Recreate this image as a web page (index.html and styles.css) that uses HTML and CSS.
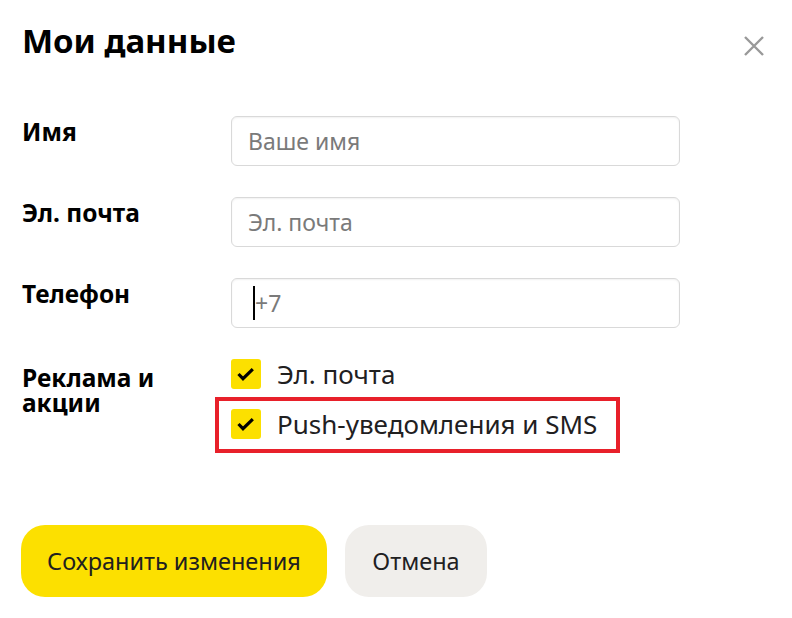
FILE: index.html
```html
<!DOCTYPE html>
<html lang="ru">
<head>
    <meta charset="UTF-8">
    <meta name="viewport" content="width=device-width, initial-scale=1.0">
    <title>Мои данные</title>
    <link rel="stylesheet" href="styles.css">
</head>
<body>

    <div class="dialog">
        <div class="dialog-head">
            <h1>Мои данные</h1>
            <button class="close" aria-label="Закрыть">
                <svg width="20" height="20" viewBox="0 0 20 20">
                    <path d="M1 1L19 19M19 1L1 19" stroke="#999" stroke-width="2.4" fill="none"/>
                </svg>
            </button>
        </div>

        <div class="form">
            <div class="row">
                <label class="label" for="name">Имя</label>
                <input class="field" id="name" type="text" placeholder="Ваше имя">
            </div>
            <div class="row">
                <label class="label" for="email">Эл. почта</label>
                <input class="field" id="email" type="text" placeholder="Эл. почта">
            </div>
            <div class="row">
                <label class="label" for="phone">Телефон</label>
                <div class="field phone">
                    <span class="caret"></span>
                    <span class="placeholder">+7</span>
                </div>
            </div>
            <div class="row">
                <div class="label label-multi">Реклама и<br>акции</div>
                <div class="options">
                    <div class="option">
                        <span class="check">
                            <svg width="30" height="30" viewBox="0 0 30 30">
                                <path d="M7.5 15L12 19.7L21.8 10.2" stroke="#000" stroke-width="3.2" fill="none"/>
                            </svg>
                        </span>
                        <span>Эл. почта</span>
                    </div>
                    <div class="option marked">
                        <span class="check">
                            <svg width="30" height="30" viewBox="0 0 30 30">
                                <path d="M7.5 15L12 19.7L21.8 10.2" stroke="#000" stroke-width="3.2" fill="none"/>
                            </svg>
                        </span>
                        <span>Push-уведомления и SMS</span>
                    </div>
                </div>
            </div>
        </div>

        <div class="actions">
            <button class="btn btn-save">Сохранить изменения</button>
            <button class="btn btn-cancel">Отмена</button>
        </div>
    </div>

</body>
</html>
```

FILE: styles.css
```css
body {
    margin: 0;
    padding: 0;
    background: #fff;
    font-family: "Noto Sans", Arial, sans-serif;
    color: #000;
}
.dialog {
    width: 792px;
    height: 618px;
    padding: 19px 0 0 22px;
    box-sizing: border-box;
}
.dialog-head {
    display: flex;
    justify-content: space-between;
    align-items: flex-start;
    height: 97px;
}
.dialog-head h1 {
    margin: 0;
    font-size: 33px;
    font-weight: 700;
    line-height: 44px;
}
.close {
    margin: 17px 28px 0 0;
    padding: 0;
    border: none;
    background: none;
    width: 20px;
    height: 20px;
    cursor: pointer;
}
.form {
    display: flex;
    flex-direction: column;
    gap: 31px;
}
.row {
    display: flex;
    align-items: flex-start;
}
.label {
    width: 209px;
    flex-shrink: 0;
    font-size: 24.5px;
    font-weight: 700;
    line-height: 24px;
    padding-top: 4px;
}
.label-multi {
    line-height: 25px;
    padding-top: 6px;
}
.field {
    width: 449px;
    height: 50px;
    box-sizing: border-box;
    border: 1px solid #d9d9d9;
    border-radius: 6px;
    box-shadow: inset 0 1px 2px rgba(0, 0, 0, 0.06);
    padding: 0 16px;
    font-family: inherit;
    font-size: 23px;
    color: #21201f;
    outline: none;
}
.field::placeholder {
    color: #7a7a7a;
}
.phone {
    display: flex;
    align-items: center;
    padding-left: 21px;
}
.caret {
    width: 2px;
    height: 34px;
    background: #000;
}
.placeholder {
    color: #7a7a7a;
}
.options {
    display: flex;
    flex-direction: column;
    gap: 20px;
}
.option {
    display: flex;
    align-items: center;
    gap: 16px;
    font-size: 26px;
    line-height: 30px;
    color: #21201f;
}
.option.marked {
    width: fit-content;
    border: 4px solid #e8202a;
    margin: -12px 0 0 -16px;
    padding: 8px 19px 10px 12px;
}
.check {
    width: 30px;
    height: 30px;
    flex-shrink: 0;
    border-radius: 3px;
    background: #fce000;
}
.check svg {
    display: block;
}
.actions {
    display: flex;
    gap: 18px;
    margin-top: 72px;
    margin-left: -1px;
}
.btn {
    height: 72px;
    border: none;
    border-radius: 24px;
    font-family: inherit;
    font-size: 23.5px;
    color: #21201f;
    cursor: pointer;
}
.btn-save {
    width: 306px;
    background: #fce000;
}
.btn-cancel {
    width: 142px;
    background: #f0eeeb;
}
```
